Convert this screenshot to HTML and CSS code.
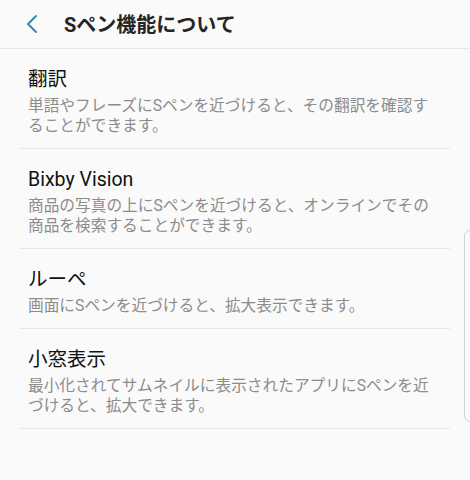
FILE: index.html
```html
<!DOCTYPE html>
<html lang="ja">
  <head>
    <meta charset="UTF-8" />
    <meta name="viewport" content="width=device-width, initial-scale=1.0" />
    <title>Sペン機能について</title>
    <link rel="stylesheet" href="styles.css">
  </head>

  <body>
    <header class="appbar">
      <button class="back" aria-label="戻る">
        <svg width="14" height="20" viewBox="0 0 14 20">
          <polyline points="11,2 3,10 11,18" fill="none" stroke="#2f8ba6" stroke-width="1.8" stroke-linecap="round" stroke-linejoin="round" />
        </svg>
      </button>
      <h1>Sペン機能について</h1>
    </header>

    <div class="list">
      <div class="item">
        <h2>翻訳</h2>
        <p>単語やフレーズにSペンを近づけると、その翻訳を確認することができます。</p>
      </div>

      <div class="item">
        <h2>Bixby Vision</h2>
        <p>商品の写真の上にSペンを近づけると、オンラインでその商品を検索することができます。</p>
      </div>

      <div class="item">
        <h2>ルーペ</h2>
        <p>画面にSペンを近づけると、拡大表示できます。</p>
      </div>

      <div class="item">
        <h2>小窓表示</h2>
        <p>最小化されてサムネイルに表示されたアプリにSペンを近づけると、拡大できます。</p>
      </div>
    </div>

    <div class="scrollbar"></div>
  </body>
</html>
```

FILE: styles.css
```css
body {
  font-family: "Roboto", "Noto Sans CJK JP", sans-serif;
  background-color: #fafafa;
  margin: 0;
  padding: 0;
  overflow: hidden;
}

.appbar {
  display: flex;
  align-items: center;
  height: 48px;
  border-bottom: 1px solid #e8e8e8;
}

.back {
  display: flex;
  align-items: center;
  justify-content: center;
  width: 40px;
  height: 40px;
  margin-left: 12px;
  padding: 0;
  background: none;
  border: none;
  cursor: pointer;
}

.appbar h1 {
  margin: 0 0 2px 12px;
  font-size: 20px;
  font-weight: bold;
  color: #252525;
}

.list {
  margin: 0 20px;
}

.item {
  padding: 18px 8px 12px;
  border-bottom: 1px solid #e8e8e8;
}

.item h2 {
  margin: 0;
  font-size: 19.5px;
  font-weight: normal;
  line-height: 26px;
  color: #111;
}

.item p {
  margin: 3px 0 0;
  font-size: 15.7px;
  line-height: 20px;
  color: #8c8c8c;
}

.scrollbar {
  position: absolute;
  top: 230px;
  left: 464px;
  width: 14px;
  height: 190px;
  border: 1px solid #d2d2d2;
  border-radius: 6px;
}
```
